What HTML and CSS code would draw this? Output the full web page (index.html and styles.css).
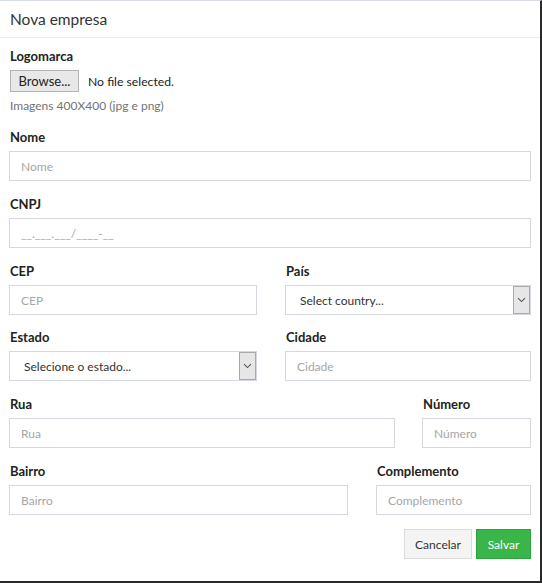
FILE: index.html
```html
<!DOCTYPE html>
<html lang="pt">
<head>
<meta charset="utf-8">
<title>Nova empresa</title>
<link rel="stylesheet" href="styles.css">
</head>
<body>
<div class="modal">
  <div class="modal-header">
    <h4 class="modal-title">Nova empresa</h4>
  </div>
  <form class="modal-body">
    <div class="group">
      <label class="label">Logomarca</label>
      <div class="file">
        <span class="file-btn">Browse...</span>
        <span class="file-text">No file selected.</span>
      </div>
      <p class="help">Imagens 400X400 (jpg e png)</p>
    </div>
    <div class="group">
      <label class="label">Nome</label>
      <input class="control" placeholder="Nome">
    </div>
    <div class="group">
      <label class="label">CNPJ</label>
      <input class="control" placeholder="__.___.___/____-__">
    </div>
    <div class="row row-half row-tight">
      <div class="group">
        <label class="label">CEP</label>
        <input class="control" placeholder="CEP">
      </div>
      <div class="group">
        <label class="label">País</label>
        <div class="select">
          <span class="select-text">Select country...</span>
          <span class="select-arrow"><svg width="9" height="6" viewBox="0 0 9 6"><path d="M1 1.2 4.5 4.6 8 1.2" fill="none" stroke="#555" stroke-width="1.1"/></svg></span>
        </div>
      </div>
    </div>
    <div class="row row-half">
      <div class="group">
        <label class="label">Estado</label>
        <div class="select">
          <span class="select-text">Selecione o estado...</span>
          <span class="select-arrow"><svg width="9" height="6" viewBox="0 0 9 6"><path d="M1 1.2 4.5 4.6 8 1.2" fill="none" stroke="#555" stroke-width="1.1"/></svg></span>
        </div>
      </div>
      <div class="group">
        <label class="label">Cidade</label>
        <input class="control" placeholder="Cidade">
      </div>
    </div>
    <div class="row row-rua">
      <div class="group">
        <label class="label">Rua</label>
        <input class="control" placeholder="Rua">
      </div>
      <div class="group">
        <label class="label">Número</label>
        <input class="control" placeholder="Número">
      </div>
    </div>
    <div class="row row-bairro">
      <div class="group">
        <label class="label">Bairro</label>
        <input class="control" placeholder="Bairro">
      </div>
      <div class="group">
        <label class="label">Complemento</label>
        <input class="control" placeholder="Complemento">
      </div>
    </div>
    <div class="actions">
      <button type="button" class="btn btn-default">Cancelar</button>
      <button type="button" class="btn btn-success">Salvar</button>
    </div>
  </form>
</div>
</body>
</html>
```
FILE: styles.css
```css
* { box-sizing: border-box; }
html, body {
  margin: 0;
  padding: 0;
  background: #fff;
}
body {
  font-family: Lato, "Noto Sans", sans-serif;
  font-size: 13px;
  color: #222;
}
.modal {
  width: 542px;
  height: 583px;
  border-top: 1px solid #d8dde6;
  border-right: 2px solid #2a2a2a;
  border-bottom: 2px solid #2a2a2a;
  background: #fff;
}
.modal-header {
  height: 37px;
  border-bottom: 1px solid #ececec;
  padding: 8px 10px 0;
}
.modal-title {
  margin: 0;
  font-size: 15.5px;
  font-weight: 400;
  color: #333;
  line-height: 20px;
}
.modal-body {
  padding: 10px 9px 0 9px;
}
.group {
  margin-bottom: 15px;
}
.row-tight .group {
  margin-bottom: 14px;
}
.label {
  display: block;
  font-weight: 700;
  font-size: 13px;
  line-height: 16px;
  margin: 0 0 6px 1px;
  color: #222;
}
.file {
  display: flex;
  align-items: center;
  margin: 1px 0 0 1px;
  height: 22px;
}
.file-btn {
  display: inline-block;
  height: 22px;
  width: 69px;
  border: 1px solid #b4b4b4;
  background: #e8e8e8;
  font-size: 13px;
  line-height: 20px;
  text-align: center;
  color: #222;
}
.file-text {
  margin-left: 9px;
  font-size: 12.2px;
  color: #222;
}
.help {
  margin: 6px 0 0 1px;
  font-size: 12px;
  color: #737373;
  line-height: 16px;
}
.control {
  display: block;
  width: 100%;
  height: 30px;
  border: 1px solid #d5d8de;
  border-radius: 0;
  padding: 0 11px;
  font-family: inherit;
  font-size: 12px;
  color: #555;
  background: #fff;
  outline: none;
}
.control::placeholder {
  color: #a6a6a6;
}
.row {
  display: grid;
  column-gap: 28px;
}
.row-half { grid-template-columns: 248px 1fr; }
.row-rua { grid-template-columns: 386px 1fr; column-gap: 27px; }
.row-bairro { grid-template-columns: 339px 1fr; }
.select {
  display: flex;
  align-items: stretch;
  height: 30px;
  border: 1px solid #d5d8de;
  background: #fff;
}
.select-text {
  flex: 1;
  display: flex;
  align-items: center;
  padding-left: 14px;
  font-size: 12px;
  color: #333;
}
.select-arrow {
  width: 17px;
  display: flex;
  align-items: center;
  justify-content: center;
  background: #e6e6e6;
  border: 1px solid #a9a9a9;
}
.actions {
  display: flex;
  justify-content: flex-end;
  gap: 4px;
  margin-top: -1px;
}
.btn {
  height: 30px;
  border-radius: 0;
  font-family: inherit;
  font-size: 12px;
  padding: 0;
  cursor: pointer;
}
.btn-default {
  width: 68px;
  background: #f4f4f4;
  border: 1px solid #dcdcdc;
  color: #333;
}
.btn-success {
  width: 55px;
  background: #3ab54a;
  border: 1px solid #2fa13e;
  color: #fff;
}
```
